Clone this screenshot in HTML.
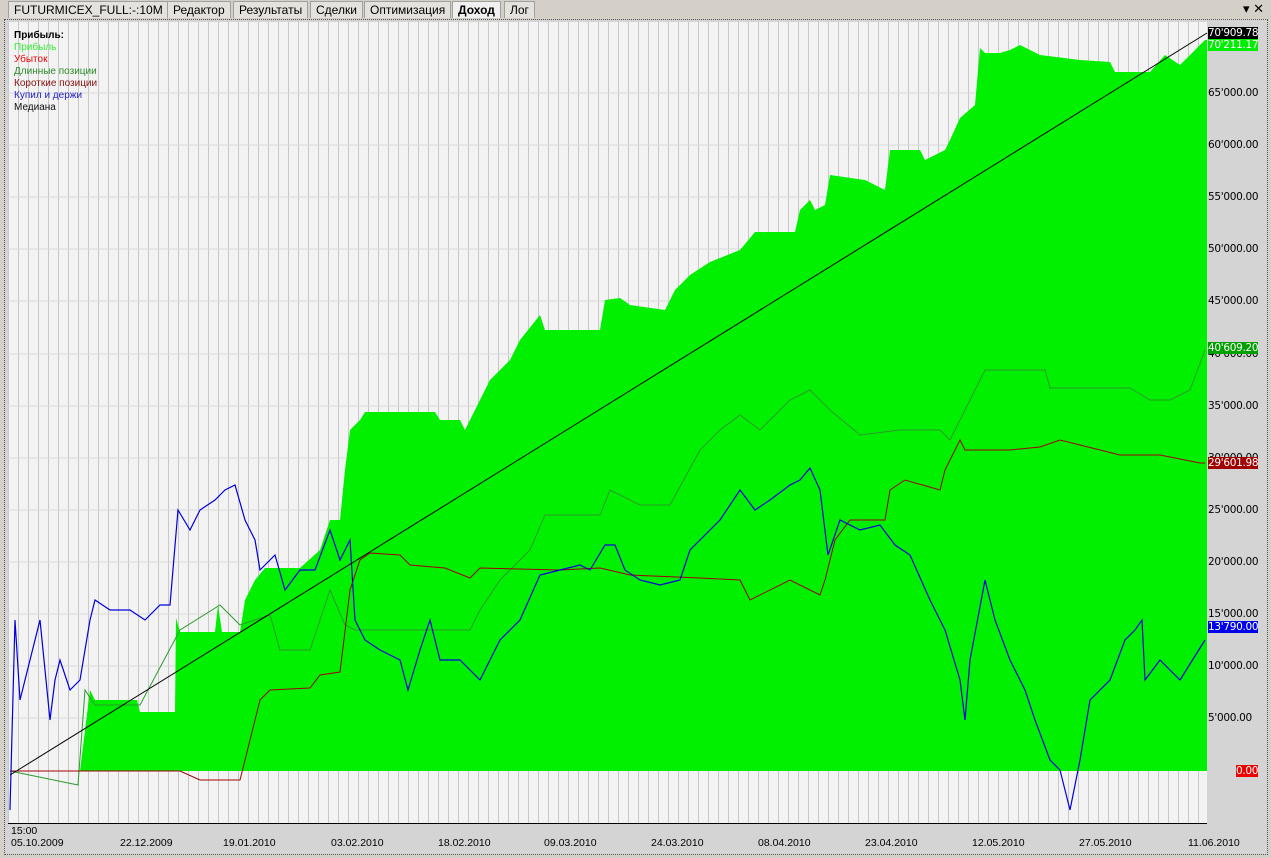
<!DOCTYPE html><html><head><meta charset="utf-8"><style>
body{margin:0;width:1271px;height:858px;background:#d4d0c8;font-family:"Liberation Sans","DejaVu Sans",sans-serif;overflow:hidden;position:relative}
.tab{position:absolute;top:1px;height:16px;font-size:12px;line-height:16px;border:1px solid #a0a0a0;border-bottom:none;background:#e4e2dc;padding:0 5px;color:#000}
.t{position:absolute;font-size:10px;line-height:12px;white-space:nowrap}
.lab{position:absolute;left:1208px;font-size:10.5px;line-height:12px;font-family:"DejaVu Sans",sans-serif;letter-spacing:-0.3px}
</style></head><body>
<div class="tab" style="left:8px">FUTURMICEX_FULL:-:10M</div>
<div class="tab" style="left:167px">Редактор</div>
<div class="tab" style="left:233px">Результаты</div>
<div class="tab" style="left:310px">Сделки</div>
<div class="tab" style="left:364px">Оптимизация</div>
<div class="tab" style="left:452px;font-weight:bold;background:#f0f0f0">Доход</div>
<div class="tab" style="left:504px">Лог</div>
<div style="position:absolute;left:1243px;top:1px;font-size:13px">▾ ✕</div>
<div style="position:absolute;left:4px;top:19px;width:1262px;height:834px;border:1px dotted #555;background:#d4d4d4"></div>
<svg style="position:absolute;left:0;top:0" width="1271" height="858">
<defs><pattern id="g" x="8" y="0" width="10" height="858" patternUnits="userSpaceOnUse"><line x1="0.5" y1="0" x2="0.5" y2="858" stroke="#c8c8c8"/></pattern></defs>
<rect x="8" y="22" width="1199" height="801" fill="#f3f3f3"/>
<rect x="8" y="22" width="1199" height="801" fill="url(#g)"/>
<g stroke="#d8d8d8">
<line x1="8" x2="1207" y1="93" y2="93"/><line x1="8" x2="1207" y1="145" y2="145"/><line x1="8" x2="1207" y1="197" y2="197"/><line x1="8" x2="1207" y1="249" y2="249"/><line x1="8" x2="1207" y1="301" y2="301"/><line x1="8" x2="1207" y1="354" y2="354"/><line x1="8" x2="1207" y1="406" y2="406"/><line x1="8" x2="1207" y1="458" y2="458"/><line x1="8" x2="1207" y1="510" y2="510"/><line x1="8" x2="1207" y1="562" y2="562"/><line x1="8" x2="1207" y1="614" y2="614"/><line x1="8" x2="1207" y1="666" y2="666"/><line x1="8" x2="1207" y1="718" y2="718"/></g>
<polygon fill="#00f000" points="10,771 80,771 90,690 95,700 137,700 140,712 175,712 176,618 180,632 215,632 218,605 222,632 240,632 245,600 255,580 265,568 300,568 320,550 330,520 340,520 345,470 350,430 360,420 365,412 435,412 440,420 460,420 465,430 475,410 490,380 500,370 510,360 520,340 540,315 545,330 600,330 605,300 620,298 630,305 665,310 675,290 690,275 710,262 740,250 755,232 795,232 800,210 810,200 815,210 825,205 830,175 865,180 885,190 890,150 920,150 925,160 945,150 950,140 960,118 975,105 980,48 985,53 1000,53 1010,50 1020,45 1040,55 1080,60 1110,62 1115,72 1150,72 1165,55 1180,65 1190,55 1205,40 1207,40 1207,771"/>
<line x1="8" y1="823.5" x2="1207" y2="823.5" stroke="#000"/>
<polyline fill="none" stroke="#2e9a2e" stroke-width="1" points="10,771 78,785 85,690 95,705 140,705 180,630 220,605 240,625 255,620 270,615 280,650 310,650 320,620 330,590 345,625 355,630 470,630 480,610 500,580 530,550 545,515 600,515 610,490 640,505 670,505 700,450 720,430 740,415 760,430 790,400 810,390 830,410 860,435 900,430 940,430 950,440 970,400 985,370 1045,370 1050,388 1130,388 1150,400 1170,400 1190,390 1205,350"/>
<polyline fill="none" stroke="#a00000" stroke-width="1" points="10,771 80,771 140,771 180,771 200,780 240,780 250,740 260,700 270,690 310,688 320,675 340,672 350,590 360,560 370,553 400,555 410,565 445,568 470,578 480,568 560,570 600,568 630,575 700,578 740,580 750,600 790,580 820,595 825,580 835,540 850,520 885,520 890,490 905,480 940,490 945,470 960,440 965,450 1010,450 1040,447 1060,440 1120,455 1160,455 1200,463 1205,463"/>
<polyline fill="none" stroke="#0000dd" stroke-width="1.2" points="10,810 15,620 20,700 30,660 40,620 50,720 55,680 60,660 70,690 80,680 90,620 95,600 110,610 130,610 145,620 160,605 170,605 178,510 190,530 200,510 215,500 225,490 235,485 245,520 255,540 260,570 275,555 285,590 300,570 315,570 330,530 340,560 350,540 355,620 365,640 380,650 400,660 408,690 420,650 430,620 440,660 460,660 470,670 480,680 490,660 500,640 520,620 540,575 560,570 580,565 590,570 605,545 615,545 625,570 640,580 660,585 680,580 690,550 700,540 720,520 740,490 755,510 770,500 790,485 800,480 810,468 820,490 828,555 840,520 860,530 880,525 895,545 910,555 930,600 945,630 960,680 965,720 970,660 985,580 995,620 1010,660 1025,690 1035,720 1050,760 1060,770 1070,810 1080,760 1090,700 1110,680 1125,640 1135,630 1142,620 1145,680 1160,660 1180,680 1205,640"/>
<line x1="10" y1="775" x2="1207" y2="33" stroke="#000" stroke-width="1"/>
</svg>
<div class="t" style="left:14px;top:30px;font-weight:bold">Прибыль:</div>
<div class="t" style="left:14px;top:42px;color:#33ee33">Прибыль</div>
<div class="t" style="left:14px;top:54px;color:#ee0000">Убыток</div>
<div class="t" style="left:14px;top:66px;color:#2a8a2a">Длинные позиции</div>
<div class="t" style="left:14px;top:78px;color:#8a1010">Короткие позиции</div>
<div class="t" style="left:14px;top:90px;color:#2222cc">Купил и держи</div>
<div class="t" style="left:14px;top:102px;color:#111">Медиана</div>
<div class="lab" style="top:39px;background:#00ee00;color:#fff;width:50px">70'211.17</div>
<div class="lab" style="top:27px;background:#000;color:#fff;width:50px">70'909.78</div>
<div class="lab" style="top:87px">65'000.00</div>
<div class="lab" style="top:139px">60'000.00</div>
<div class="lab" style="top:191px">55'000.00</div>
<div class="lab" style="top:243px">50'000.00</div>
<div class="lab" style="top:295px">45'000.00</div>
<div class="lab" style="top:348px">40'000.00</div>
<div class="lab" style="top:342px;background:#00a000;color:#fff;width:50px">40'609.20</div>
<div class="lab" style="top:400px">35'000.00</div>
<div class="lab" style="top:452px">30'000.00</div>
<div class="lab" style="top:457px;background:#a00000;color:#fff;width:50px">29'601.98</div>
<div class="lab" style="top:504px">25'000.00</div>
<div class="lab" style="top:556px">20'000.00</div>
<div class="lab" style="top:608px">15'000.00</div>
<div class="lab" style="top:621px;background:#0000ee;color:#fff;width:50px">13'790.00</div>
<div class="lab" style="top:660px">10'000.00</div>
<div class="lab" style="top:712px">5'000.00</div>
<div class="lab" style="top:765px;left:1236px;background:#ee0000;color:#fff">0.00</div>
<div class="t" style="left:11px;top:825px;font-size:10.5px">15:00</div>
<div class="t" style="left:11px;top:837px;font-size:10.5px">05.10.2009</div>
<div class="t" style="left:120px;top:837px;font-size:10.5px">22.12.2009</div>
<div class="t" style="left:223px;top:837px;font-size:10.5px">19.01.2010</div>
<div class="t" style="left:331px;top:837px;font-size:10.5px">03.02.2010</div>
<div class="t" style="left:438px;top:837px;font-size:10.5px">18.02.2010</div>
<div class="t" style="left:544px;top:837px;font-size:10.5px">09.03.2010</div>
<div class="t" style="left:651px;top:837px;font-size:10.5px">24.03.2010</div>
<div class="t" style="left:758px;top:837px;font-size:10.5px">08.04.2010</div>
<div class="t" style="left:865px;top:837px;font-size:10.5px">23.04.2010</div>
<div class="t" style="left:972px;top:837px;font-size:10.5px">12.05.2010</div>
<div class="t" style="left:1079px;top:837px;font-size:10.5px">27.05.2010</div>
<div class="t" style="left:1188px;top:837px;font-size:10.5px">11.06.2010</div>
</body></html>
